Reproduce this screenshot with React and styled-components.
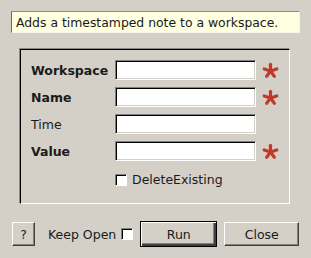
import React, { useState } from 'react'
import styled, { createGlobalStyle } from 'styled-components'

const Global = createGlobalStyle`
  body {
    margin: 0;
    background: #d4d0c8;
    font-family: "DejaVu Sans", Verdana, sans-serif;
    font-size: 12.5px;
    color: #1a1a1a;
  }
`;

const Window = styled.div`
  width: 311px;
  height: 258px;
  box-sizing: border-box;
  padding: 11px 11px 0 11px;
  display: flex;
  flex-direction: column;
`;

const Description = styled.div`
  height: 22px;
  box-sizing: border-box;
  background: #ffffe1;
  border: 1px solid;
  border-color: #8a8a8a #f4f4f4 #f4f4f4 #6a6a6a;
  padding-left: 4px;
  display: flex;
  align-items: center;
  white-space: nowrap;
  font-size: 12.4px;
`;

const Group = styled.div`
  margin: 16px 10px 0 9px;
  height: 155px;
  box-sizing: border-box;
  border: 1px solid;
  border-color: #000 #fff #fff #000;
  box-shadow: -1px -1px 0 #8c8a86;
  padding: 10px 0 0 10px;
  display: grid;
  grid-template-columns: 84px 141px 23px;
  grid-auto-rows: 20px;
  row-gap: 7px;
  align-items: center;
`;

const Label = styled.div`
  font-weight: ${p => (p.$required ? 'bold' : 'normal')};
  white-space: nowrap;
  padding-top: 1px;
`;

const Entry = styled.input`
  width: 141px;
  height: 20px;
  box-sizing: border-box;
  margin: 0;
  background: #fff;
  border: 1px solid;
  border-color: #808080 #fff #fff #808080;
  box-shadow: inset 1px 1px 0 #000, inset -1px -1px 0 #d4d0c8;
  outline: none;
  padding: 0 3px;
  font: inherit;
`;

const Star = styled.svg`
  width: 17px;
  height: 17px;
  margin-left: 6px;
  display: block;
`;

const CheckRow = styled.label`
  grid-column: 2 / 4;
  display: flex;
  align-items: center;
  gap: 5px;
  margin-top: 3px;
  white-space: nowrap;
`;

const Box = styled.span`
  width: 12px;
  height: 12px;
  box-sizing: border-box;
  display: inline-block;
  background: #fff;
  border: 1px solid;
  border-color: #808080 #fff #fff #808080;
  box-shadow: inset 1px 1px 0 #000;
`;

const Footer = styled.div`
  margin-top: 17px;
  display: flex;
  align-items: center;
  margin-left: 1px;
`;

const Button = styled.button`
  box-sizing: border-box;
  height: 24px;
  width: ${p => p.$w}px;
  margin: 0 0 0 ${p => p.$ml || 0}px;
  padding: 0;
  font: inherit;
  color: #1a1a1a;
  background: #d4d0c8;
  border: 1px solid;
  border-color: #fff #404040 #404040 #fff;
  box-shadow: inset -1px -1px 0 #808080;
  outline: none;
  ${p => p.$default && `
    height: 26px;
    border-color: #000;
    box-shadow: inset 1px 1px 0 #fff, inset -2px -2px 0 #404040, inset -3px -3px 0 #808080;
  `}
`;

const KeepOpen = styled.label`
  display: flex;
  align-items: center;
  gap: 5px;
  margin-left: 13px;
  margin-right: 7px;
  white-space: nowrap;
`;

const Asterisk = () => (
  <Star viewBox="0 0 18 18">
    <g stroke="#c0392b" strokeWidth="3.4" strokeLinecap="round">
      {[0, 72, 144, 216, 288].map(a => (
        <line key={a} x1="9" y1="9.5" x2="9" y2="2.5" transform={`rotate(${a} 9 9.5)`} />
      ))}
    </g>
  </Star>
);

const fields = [
  { name: 'Workspace', required: true },
  { name: 'Name', required: true },
  { name: 'Time', required: false },
  { name: 'Value', required: true },
];

const App = () => {
  const [values, setValues] = useState({});
  return (
    <Window>
      <Global />
      <Description>Adds a timestamped note to a workspace.</Description>
      <Group>
        {fields.map(f => (
          <React.Fragment key={f.name}>
            <Label $required={f.required}>{f.name}</Label>
            <Entry
              value={values[f.name] || ''}
              onChange={e => setValues({ ...values, [f.name]: e.target.value })}
            />
            {f.required ? <Asterisk /> : <span />}
          </React.Fragment>
        ))}
        <span />
        <CheckRow><Box />DeleteExisting</CheckRow>
      </Group>
      <Footer>
        <Button $w={23}>?</Button>
        <KeepOpen>Keep Open <Box /></KeepOpen>
        <Button $w={77} $default>Run</Button>
        <Button $w={75} $ml={7}>Close</Button>
      </Footer>
    </Window>
  )
}

export default App
